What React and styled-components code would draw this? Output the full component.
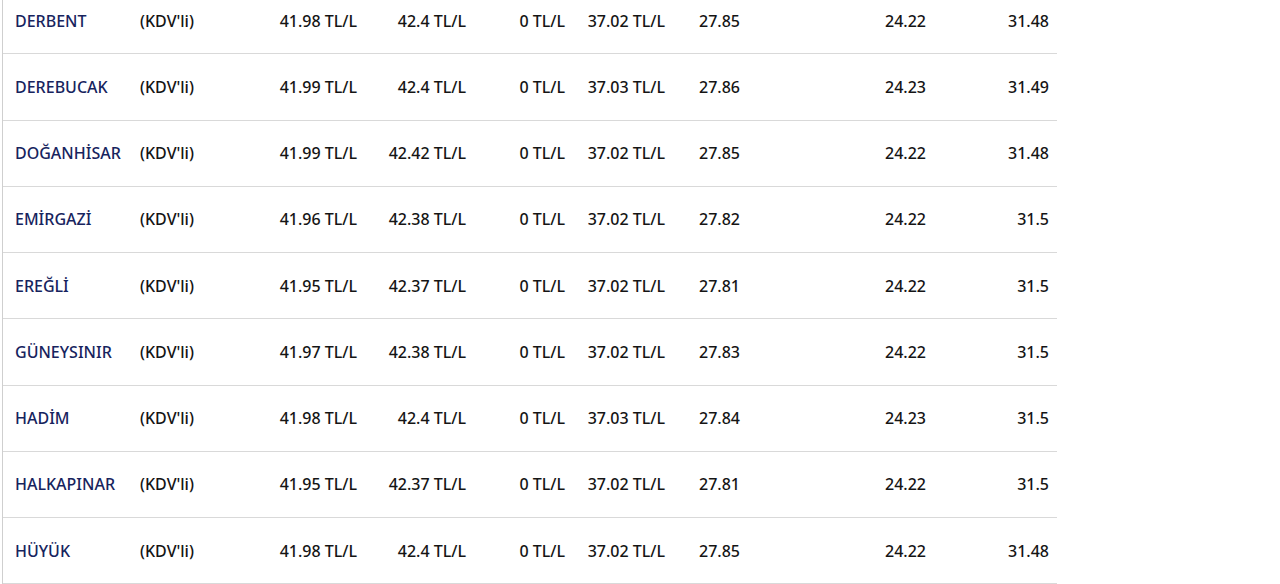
import styled, { createGlobalStyle } from "styled-components";

const GlobalStyle = createGlobalStyle`
  html, body {
    margin: 0;
    padding: 0;
    background: #fff;
  }
  body {
    font-family: "Noto Sans", "Open Sans", Arial, sans-serif;
    overflow: hidden;
  }
`;

const rows = [
  ["DERBENT", "41.98", "42.4", "0", "37.02", "27.85", "24.22", "31.48"],
  ["DEREBUCAK", "41.99", "42.4", "0", "37.03", "27.86", "24.23", "31.49"],
  ["DOĞANHİSAR", "41.99", "42.42", "0", "37.02", "27.85", "24.22", "31.48"],
  ["EMİRGAZİ", "41.96", "42.38", "0", "37.02", "27.82", "24.22", "31.5"],
  ["EREĞLİ", "41.95", "42.37", "0", "37.02", "27.81", "24.22", "31.5"],
  ["GÜNEYSINIR", "41.97", "42.38", "0", "37.02", "27.83", "24.22", "31.5"],
  ["HADİM", "41.98", "42.4", "0", "37.03", "27.84", "24.23", "31.5"],
  ["HALKAPINAR", "41.95", "42.37", "0", "37.02", "27.81", "24.22", "31.5"],
  ["HÜYÜK", "41.98", "42.4", "0", "37.02", "27.85", "24.22", "31.48"],
];

const Table = styled.div`
  margin: -12px 0 0 2px;
  width: 1054px;
  border-left: 1px solid #cfcfcf;
`;

const Row = styled.div`
  display: grid;
  grid-template-columns: 129px 118px 115px 109px 99px 100px 75px 186px 123px;
  align-items: center;
  height: 66.25px;
  box-sizing: border-box;
  border-bottom: 1px solid #d9d9d9;
  font-size: 16px;
  font-weight: 500;
  color: #151515;
`;

const Cell = styled.div`
  padding: 0 8px;
  text-align: ${(p) => (p.left ? "left" : "right")};
  white-space: nowrap;
`;

const Name = styled(Cell)`
  padding-left: 12px;
  color: #17245e;
`;

export default function App() {
  return (
    <>
      <GlobalStyle />
      <Table>
        {rows.map(([name, a, b, c, d, e, f, g]) => (
          <Row key={name}>
            <Name left>{name}</Name>
            <Cell left>(KDV'li)</Cell>
            <Cell>{a} TL/L</Cell>
            <Cell>{b} TL/L</Cell>
            <Cell>{c} TL/L</Cell>
            <Cell>{d} TL/L</Cell>
            <Cell>{e}</Cell>
            <Cell>{f}</Cell>
            <Cell>{g}</Cell>
          </Row>
        ))}
      </Table>
    </>
  );
}
